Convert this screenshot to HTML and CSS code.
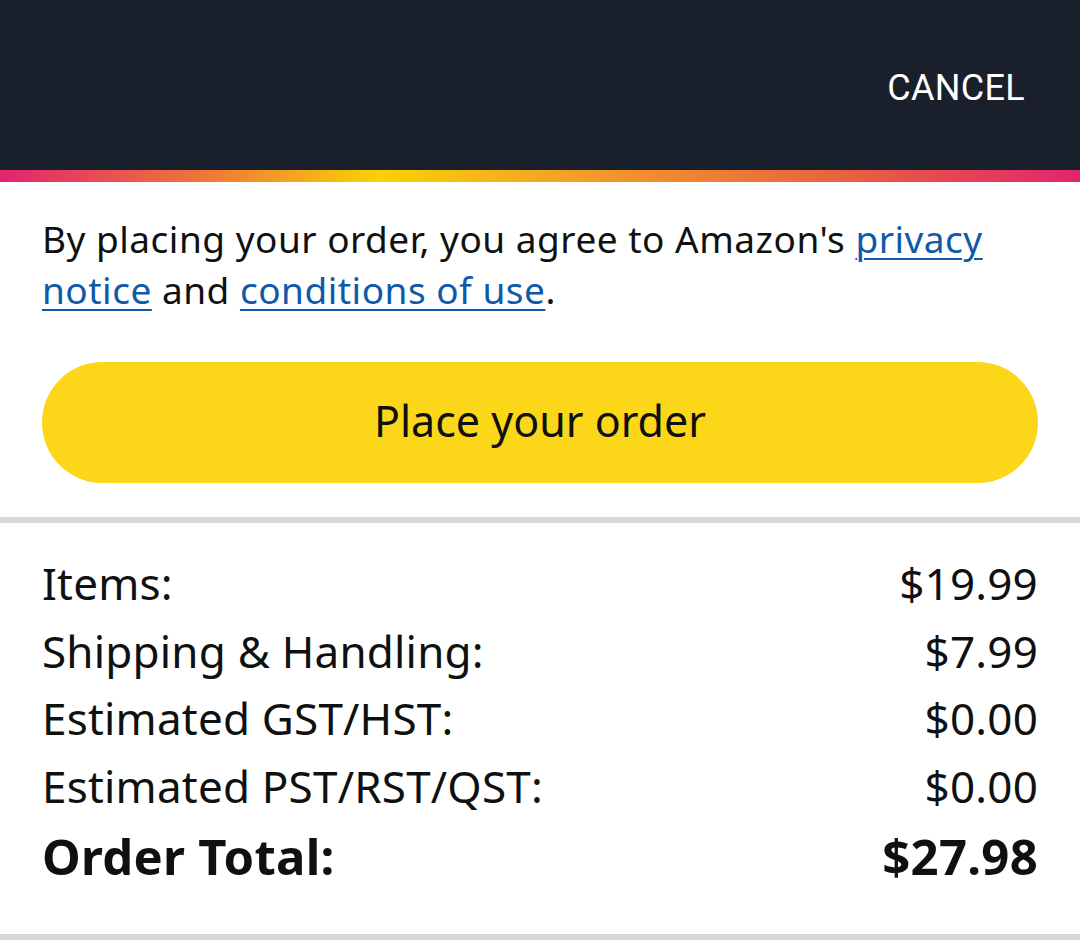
FILE: index.html
```html
<!DOCTYPE html>
<html lang="en">
<head>
<meta charset="utf-8">
<link rel="stylesheet" href="styles.css">
<title>Place your order</title>
</head>
<body>
<header class="topbar">
  <span class="cancel">CANCEL</span>
</header>
<div class="accent"></div>
<main class="content">
  <p class="agree">By placing your order, you agree to Amazon's <a href="#">privacy notice</a> and <a href="#">conditions of use</a>.</p>
  <button class="place">Place your order</button>
</main>
<div class="divider"></div>
<section class="summary">
  <div class="row"><span>Items:</span><span>$19.99</span></div>
  <div class="row"><span>Shipping &amp; Handling:</span><span>$7.99</span></div>
  <div class="row"><span>Estimated GST/HST:</span><span>$0.00</span></div>
  <div class="row"><span>Estimated PST/RST/QST:</span><span>$0.00</span></div>
  <div class="row total"><span>Order Total:</span><span>$27.98</span></div>
</section>
<div class="divider"></div>
</body>
</html>
```

FILE: styles.css
```css
* { box-sizing: border-box; }
html, body { margin: 0; padding: 0; background: #fff; }
body { font-family: "Noto Sans", "Open Sans", sans-serif; color: #0f1111; }

.topbar {
  height: 170px;
  background: #19202b;
  display: flex;
  align-items: center;
  justify-content: flex-end;
  padding: 6px 55px 0 0;
}
.cancel {
  font-family: Roboto, "Liberation Sans", sans-serif;
  color: #fff;
  font-size: 36px;
  letter-spacing: 0.3px;
}
.accent {
  height: 12px;
  background: linear-gradient(90deg, #e2246f 0%, #ef7c35 20%, #f9d206 35%, #f29a2a 55%, #e8623f 78%, #e2246f 100%);
}
.content {
  padding: 31px 42px 34px;
}
.agree {
  margin: 0;
  font-size: 37px;
  line-height: 51px;
  letter-spacing: 0.5px;
}
.agree a {
  color: #0f5aa8;
  text-decoration: underline;
  text-underline-offset: 5px;
  text-decoration-thickness: 2px;
}
.place {
  display: block;
  width: 100%;
  height: 121px;
  margin-top: 47px;
  border: none;
  border-radius: 61px;
  background: #fcd719;
  color: #0f1111;
  font-family: "Noto Sans", "Open Sans", sans-serif;
  font-size: 43px;
  padding: 0 0 4px;
}
.divider {
  height: 6px;
  background: #d5d9d9;
}
.summary {
  padding: 27px 42px 42px;
}
.row {
  display: flex;
  justify-content: space-between;
  font-size: 44px;
  line-height: 67.5px;
  letter-spacing: 0.2px;
}
.row.total {
  font-weight: 700;
  font-size: 49px;
  line-height: 72px;
  letter-spacing: 0.3px;
}
```
